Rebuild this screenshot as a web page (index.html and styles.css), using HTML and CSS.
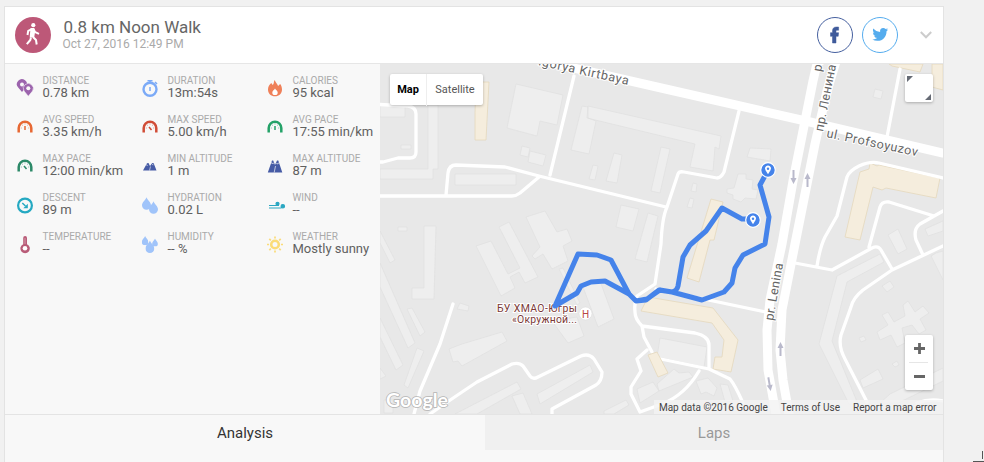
FILE: index.html
```html
<!DOCTYPE html>
<html lang="en">
<head>
<meta charset="utf-8">
<title>Noon Walk</title>
<link rel="stylesheet" href="styles.css">
</head>
<body>
<svg class="defs" width="0" height="0">
  <symbol id="gauge" viewBox="0 0 16 16"><path d="M1.700 13.500V9A6.300 6.300 0 0 1 14.300 9V13.500" fill="none" stroke="currentColor" stroke-width="2.500"/><path d="M3.800 9h1M5 5.800l.8.7M8 4.500v1M11 5.800l-.8.7M12.200 9h-1" stroke="currentColor" stroke-width=".8" opacity=".7"/></symbol>
  <symbol id="drop" viewBox="0 0 10 14"><path d="M5 0C4 3 0 5.500 0 9a5 5 0 0 0 10 0C10 5.500 6 3 5 0z" fill="currentColor"/></symbol>
  <symbol id="pin" viewBox="0 0 16 16"><circle cx="8" cy="8" r="7.300" fill="#4583ea" stroke="#fff" stroke-width="1.200"/><path d="M8 12.200L5.500 8.200A3 3 0 1 1 10.500 8.200z" fill="#fff"/><circle cx="8" cy="6.700" r="1.200" fill="#4583ea"/></symbol>
  <symbol id="arrow" viewBox="0 0 8 14"><path d="M4 0L7 6H5v8H3V6H1z" fill="#b9b9cb"/></symbol>
</svg>
<main class="card">
  <header class="head">
    <svg class="sport" viewBox="0 0 36 36"><circle cx="18" cy="18" r="18" fill="#bd5878"/><circle cx="18.300" cy="8.200" r="2.100" fill="#fff"/><path d="M17.500 11.800L13.200 13.800L12.500 18M18.300 12L20.200 15.200L24 16.800M16 20.500L15.300 23L11.800 27.200M18 20L21 23L21.700 27.500" fill="none" stroke="#fff" stroke-width="2" stroke-linejoin="round"/><path d="M15.500 11h3.700l1 3-1 6.500h-4.500z" fill="#fff"/></svg>
    <div class="titles"><h1>0.8 km Noon Walk</h1><p>Oct 27, 2016 12:49 PM</p></div>
    <div class="social">
      <svg viewBox="0 0 36 36"><circle cx="18" cy="18" r="17.500" fill="#fff" stroke="#46609f"/><path d="M15.500 26V19.300H13.500V15.700h2v-1.700c0-2.800 1.400-4 4-4h2.100V13.200h-1.300c-1.100 0-1.300.5-1.300 1.300v1.200h2.600l-.4 3.600h-2.200v6.700z" fill="#3f5b9b" stroke="#3f5b9b" stroke-width=".5"/></svg>
      <svg viewBox="0 0 36 36"><circle cx="18" cy="18" r="17.500" fill="#fff" stroke="#55acee"/><path transform="translate(10.300 9.500) scale(.66)" d="M23.950 4.570a10 10 0 0 1-2.820.78 4.960 4.960 0 0 0 2.160-2.730c-.95.560-2 .96-3.120 1.190a4.920 4.920 0 0 0-8.390 4.480C7.700 8.100 4.070 6.130 1.640 3.160a4.820 4.820 0 0 0-.66 2.480c0 1.710.87 3.210 2.190 4.100a4.900 4.900 0 0 1-2.230-.62v.06a4.920 4.920 0 0 0 3.950 4.830 5 5 0 0 1-2.210.08 4.940 4.940 0 0 0 4.600 3.420A9.870 9.870 0 0 1 0 19.540a13.990 13.990 0 0 0 7.550 2.210c9.050 0 14-7.500 14-13.980 0-.21 0-.42-.02-.63a9.940 9.940 0 0 0 2.460-2.550z" fill="#55acee"/></svg>
    </div>
    <svg class="chev" viewBox="0 0 12 8"><path d="M.8 1L6 6.300 11.200 1" fill="none" stroke="#ccc" stroke-width="2"/></svg>
  </header>
  <section class="body">
    <div class="stats">
      <div class="stat"><svg viewBox="0 0 16 16"><g fill="#9c64ad"><path d="M5 12L1.200 7.500A5 5 0 1 1 9 7z"/><path d="M11.300 16.300L7 11A5 5 0 1 1 15.600 11z" stroke="#f8f8f8" stroke-width=".6"/></g><circle cx="5" cy="4.500" r="2" fill="#f8f8f8"/><circle cx="11.300" cy="8.300" r="2" fill="#f8f8f8"/></svg><div><h2>DISTANCE</h2><p>0.78 km</p></div></div>
      <div class="stat"><svg viewBox="0 0 16 16" fill="none" stroke="#7baaf7"><circle cx="8" cy="9.300" r="6.500" stroke-width="2.400"/><path d="M5.500.8h5M8 1v2M13 2l2 2" stroke-width="1.600"/><path d="M8 7v4" stroke-width="1.500"/></svg><div><h2>DURATION</h2><p>13m:54s</p></div></div>
      <div class="stat"><svg viewBox="0 0 16 16"><path d="M7.800 0c-1.500 1.800-.4 3.800-2.200 5L4.300 3C2 5 1 7 1 9.500 1 13.500 4 16.300 8 16.300s7-2.800 7-6.800c0-2.200-.7-4.200-1.900-5.500l-2 2C10 3.500 8.600 2.500 7.800 0z" fill="#ef8059"/><path d="M8 8.500c-.5 1.300-2.700 2-2.700 3.900a2.700 2.700 0 0 0 5.400 0C10.700 10.500 8.500 9.800 8 8.500z" fill="#fff"/></svg><div><h2>CALORIES</h2><p>95 kcal</p></div></div>
      <div class="stat orange"><svg viewBox="0 0 16 16"><use href="#gauge"/><path d="M8 7v4" stroke="currentColor" stroke-width="1.500"/></svg><div><h2>AVG SPEED</h2><p>3.35 km/h</p></div></div>
      <div class="stat red"><svg viewBox="0 0 16 16"><use href="#gauge"/><path d="M7 8l2.500 3" stroke="currentColor" stroke-width="1.500"/></svg><div><h2>MAX SPEED</h2><p>5.00 km/h</p></div></div>
      <div class="stat green"><svg viewBox="0 0 16 16"><use href="#gauge"/><path d="M8 7v4" stroke="currentColor" stroke-width="1.500"/></svg><div><h2>AVG PACE</h2><p>17:55 min/km</p></div></div>
      <div class="stat deep"><svg viewBox="0 0 16 16"><use href="#gauge"/><path d="M7 8l2.500 3" stroke="currentColor" stroke-width="1.500"/></svg><div><h2>MAX PACE</h2><p>12:00 min/km</p></div></div>
      <div class="stat"><svg viewBox="0 0 16 16"><path d="M1 12.500L5 5.300l1.500-.3L8 8l2.200-3 1.500.3L14.500 12.500z" fill="#465ba5"/><path d="M7.500 12.500l1-4M4 7.500l.9-.8.8 1M10 7l.8-.6.8.8" stroke="#f8f8f8" stroke-width=".6" fill="none"/></svg><div><h2>MIN ALTITUDE</h2><p>1 m</p></div></div>
      <div class="stat"><svg viewBox="0 0 16 16"><path d="M.8 14.500L5 2.500h1.200L8 7l2-4.500h1.300L15.300 14.500z" fill="#465ba5"/><path d="M7.200 14.500L8.500 8M3.800 5.500l1.200-.8.9 1.200.8-1.200M9.300 5.300l1 .8.9-1.200 1 .9" stroke="#f8f8f8" stroke-width=".7" fill="none"/></svg><div><h2>MAX ALTITUDE</h2><p>87 m</p></div></div>
      <div class="stat"><svg viewBox="0 0 16 16"><circle cx="8" cy="8.500" r="6.900" fill="none" stroke="#25a9c2" stroke-width="2.200"/><path d="M5.300 6l3.200 3" stroke="#25a9c2" stroke-width="1.500"/><path d="M10.800 6.800v4.500H6.300z" fill="#25a9c2"/></svg><div><h2>DESCENT</h2><p>89 m</p></div></div>
      <div class="stat drops"><svg viewBox="0 0 16 16"><use href="#drop" x="0" y="0" width="9" height="13"/><use href="#drop" x="7" y="4" width="9" height="13"/></svg><div><h2>HYDRATION</h2><p>0.02 L</p></div></div>
      <div class="stat"><svg viewBox="0 0 16 16" stroke="#2aa7c2" stroke-width="1.200" fill="#2aa7c2"><path d="M2 8.500h10M2 11h12.500" /><circle cx="10.500" cy="6.800" r="1.500"/><circle cx="15.800" cy="9.300" r="1.700"/></svg><div><h2>WIND</h2><p>--</p></div></div>
      <div class="stat"><svg viewBox="0 0 16 16"><path d="M6.200 2a1.900 1.900 0 0 1 3.800 0v6.200a4.700 4.700 0 1 1-3.800 0z" fill="#b95c78"/><circle cx="8" cy="12.300" r="2.300" fill="#fff"/><path d="M8 2v6" stroke="#dba7b6" stroke-width=".8"/></svg><div><h2>TEMPERATURE</h2><p>--</p></div></div>
      <div class="stat drops"><svg viewBox="0 0 16 16"><use href="#drop" x="-.2" y="0" width="6.600" height="9.200"/><use href="#drop" x="10" y="2.500" width="6" height="8"/><use href="#drop" x="3.400" y="4.500" width="9" height="12.500"/></svg><div><h2>HUMIDITY</h2><p>-- %</p></div></div>
      <div class="stat"><svg viewBox="0 0 16 16" fill="none" stroke="#fbdc78"><circle cx="8" cy="8.500" r="3.800" stroke-width="2.600"/><path d="M8 .5v2M8 14.500v2M0 8.500h2M14 8.500h2M2.300 2.800l1.500 1.500M12.200 12.700l1.500 1.500M2.300 14.200l1.500-1.500M12.200 4.300l1.500-1.500" stroke-width="1.700"/></svg><div><h2>WEATHER</h2><p>Mostly sunny</p></div></div>
    </div>
    <div class="map">
      <svg class="canvas" viewBox="380 64 563 350">
        <rect x="380" y="64" width="563" height="350" fill="#e8e8e8"/>
        <g class="blocks">
          <path d="M380 105H405V117H380zM428 105H438V169H433V179H380V169H428zM401 145h10v4h-10zM516 84L563 95L557 125L540 121L537 136L507 128zM522 146l8 2-2 9-8-2zM530 151l16 4-3 11-15-4zM455 174H516V185H455zM582 106L588 107L588 118L596 121L589 154L571 150zM588 106L721 136L719 149L715 147L713 171L690 167L695 144L587 118zM614 153l8 2-5 28-11-2zM593 165l5 1-3 14-6-1zM661 147l9 2-10 44-9-2zM693 183l4 1-1 8-5-1zM690 198l4 1-2 9-5-1zM621 205l18 4-6 22-17-4zM648 213l10 3-11 46-12-3zM750 148l21 1-1 12-23-4zM738 174h8l0 5 7 1-1 9 6 1-2 9-11-1-4 4-8-3v-4l-6-2v-4l7-1z"/>
          <path d="M380 231l15 29-5 3-10-20zM424 226H436L434 299H412V288H424zM380 263l35 80-7 5-28-61zM398 227h9v4h-9zM412 308l13 24-5 4-13-27zM417 348l7 3-16 37-4-3zM380 318l23 47-7 5-16-33zM460 303l9 3-1 5-11-2zM380 368l6 8-6 3zM449 349L462 344 502 332 507 341 462 366 458 361 453 362zM476 246L491 241 508 274 520 268 499 227 509 222 538 277 525 283 519 272 510 277 515 288 501 296zM526 217L545 211 557 232 567 229 572 241 563 246 568 261 552 269 543 254 535 259 532 256 540 247zM559 269l4-1 17 35-3 2z"/>
          <path d="M583 287L600 281 614 319 598 327zM552 321L577 317 584 336 568 343zM455 414L517 382 521 389 477 414zM537 394L590 365 593 372 540 404zM512 396l11-3 9 21h-12zM384 400h9v13h-9zM660 338L707 347 704 367 657 357zM637 389l16-7 6 9-19 12zM657 384l17-15 5 4 10-1 4 5-34 14zM696 381l12-3 9 10-3 8-8-4-5 2zM720 384l8 1 5 16-8 1zM604 411l22-11 3 5-15 9h-10z"/>
          <path d="M875 89l8 2-2 8-8-2zM925 229l18-8v10l-15 5zM888 235l10-6 9 20-9 5zM837 276L880 254 884 262 847 282 832 341 858 404 849 404 819 344zM882 286l8-5 4 6-7 5zM877 332L888 325 882 315 888 312 894 322 905 316 903 305 908 301 915 312 923 306 929 313 920 319 926 330 919 334 912 325 902 328 905 343 897 347 891 335 880 340zM859 338l5-2 2 4-5 2zM892 364l5-3 2 4-4 2zM860 380l18-11 5 10-20 9zM890 394l53-26v13l-45 22h-18zM931 256l12 24v-29l-7 2z"/>
        </g>
        <g class="tan">
          <path d="M476 82h13l-3 58h-11V113z"/><path d="M711 199l12 3-9 38h-4l-11 42-12-4z"/>
          <path d="M889 64h34l-3 8-28-6zM932 64h11v26l-11-3z"/><path d="M879 165l61 13-4 20-50-10-4 2-9-3-13 53-15-3 15-65 9-3 1-6 7 3z"/>
          <path d="M648 297L713 308 738 340 731 372 713 369 715 357 722 357 724 340 712 323 641 311z"/>
        </g>
        <g class="roads">
          <path d="M380 104.500L408 106Q416 107 416 114V152Q416 158 410 158H398L383 162H380M380 196H512Q516 196 520 193L539 177M446 195L448 173Q449 165 456 165L505 167 539 176 666 207H667L678 174Q679 171 684 172L717 178Q721 178 724 172L739 111M550 175L574 76M667 207Q662 218 661 244L655 284 637 296Q634 302 635 312 635 319 642 326L644 337 652 352M642 326L695 333Q709 336 709 345V369L656 358M647 350L637 359 641 371 631 387V394L640 412 662 404Q685 395 699 371M709 369L730 379Q735 385 743 403M656 289L766 312"/>
          <path d="M453 304L440 344 420 391 414 414M430 414Q450 400 477 382L512 364Q519 362 523 366L530 376Q533 380 538 377L581 356Q589 353 594 359L602 372Q602 381 596 385L552 409V414"/>
          <path d="M900 69L887 137M943 178L879 163Q870 161 859 166 849 171 847 177L837 216 825 237Q820 247 817 266M795 263L832 270 872 248Q878 245 881 250L892 269M869 247L880 207Q882 201 889 202L934 216M943 211L920 224Q913 229 916 240L923 255M943 246L892 270 863 290Q853 298 851 307L841 335Q838 346 845 359L867 402M917 403Q930 398 943 401"/>
        </g>
        <path class="tan" d="M648 355L657 352 668 373 658 377z"/>
        <g class="main-roads"><path d="M530 58L670 90 810 122 943 153"/><path d="M819 55L813 81 793 181 782 244 770 300 767 330 768 370 777 420"/><path d="M838 55L827 91 815 144 795 244 782 310 780 350 783 380 790 420"/></g>
        <use href="#arrow" x="803" y="173" width="9" height="14"/><use href="#arrow" x="776" y="342" width="9" height="14"/>
        <g transform="rotate(180 794 177)"><use href="#arrow" x="790" y="170" width="9" height="14"/></g><g transform="rotate(170 770 384)"><use href="#arrow" x="766" y="377" width="9" height="14"/></g>
        <g class="streets">
          <text transform="translate(538 65) rotate(12.500)" textLength="92">igorya Kirtbaya</text>
          <text transform="translate(826 137) rotate(12)" textLength="93">ul. Profsoyuzov</text>
          <text transform="translate(823 132) rotate(-79)" textLength="68">пр. Ленина</text>
          <text transform="translate(821 72) rotate(-79)">р.</text>
          <text transform="translate(773 321) rotate(-80)" textLength="58">pr. Lenina</text>
        </g>
        <g class="place"><text x="577" y="312" textLength="80">БУ ХМАО-Югры</text><text x="577" y="323" textLength="65">«Окружной...</text></g>
        <circle cx="585.500" cy="313.500" r="6.500" fill="#fff" stroke="#ddd" stroke-width=".6"/><text class="hospital" x="585.500" y="317.500">H</text>
        <path class="route" d="M768 170L760 185 769 217 765 244 743 255 735 268 732 283 724 292 702 300 672 292 659 290 646 300 636 301 629 294 605 281 591 282 581 286 577 293 555 306 578 254 597 255 611 260 629 294 636 301 647 299 660 290 672 292Q677 291 678 286L683 257 690 245 706 231 722 208 742 219 753 219"/>
        <use href="#pin" x="760" y="162" width="16" height="16"/><use href="#pin" x="745" y="212" width="16" height="16"/>
        <text class="google" x="386" y="407" textLength="62">Google</text>
      </svg>
      <div class="types"><b>Map</b><span>Satellite</span></div>
      <svg class="full" viewBox="0 0 28 28"><path d="M2 2h6L2 8zM26 26h-6l6-6z" fill="#666b75"/></svg>
      <svg class="zoom" viewBox="0 0 28 55"><path d="M9 13.500h11M14.500 8v11M9 41.500h11" stroke="#666" stroke-width="2.800"/><path d="M4 27.500h19" stroke="#e6e6e6"/></svg>
      <div class="credits"><span>Map data ©2016 Google</span><span>Terms of Use</span><span>Report a map error</span></div>
    </div>
  </section>
  <nav class="tabs"><a class="active">Analysis</a><a>Laps</a></nav>
</main>
<svg class="corner" viewBox="0 0 12 12"><path d="M1 11.500h11M10.500 1v8" stroke="#555" fill="none"/></svg>
</body>
</html>
```
FILE: styles.css
```css
* { box-sizing: border-box; }
body { margin: 0; padding: 6px 0 0 4px; height: 462px; overflow: hidden; background: #f1f1f1; font-family: Roboto, "Liberation Sans", sans-serif; color: #666; }
h1, h2, p { margin: 0; font-weight: 400; }
svg { display: block; }
.defs { position: absolute; }
.card { width: 940px; height: 470px; border: 1px solid #e3e3e3; background: #f8f8f8; }
.head { height: 57px; display: flex; align-items: center; padding: 0 11px 0 10px; background: #fff; border-bottom: 1px solid #e6e6e6; }
.sport { width: 36px; height: 36px; }
.titles { flex: 1; padding-left: 11.5px; }
.titles h1 { font-size: 17px; line-height: 20px; margin-top: -1px; color: #666; padding-left: 1px; }
.titles p { font-size: 12px; line-height: 15px; color: #aaa; }
.social { display: flex; gap: 9px; }
.social svg { width: 36px; height: 36px; }
.chev { width: 12px; height: 8px; margin-left: 22px; }
.body { display: flex; height: 350px; }
.stats { width: 375px; padding: 11px 0 0 12px; display: grid; grid-template-columns: repeat(3, 125px); grid-auto-rows: 39px; align-content: start; }
.stat { display: flex; gap: 9.5px; white-space: nowrap; }
.stat > svg { width: 16px; height: 16px; margin-top: 5px; flex: none; overflow: visible; }
.stat h2 { font-size: 10px; line-height: 11px; color: #aaa; }
.stat p { font-size: 13px; line-height: 14px; color: #606060; }
.orange { color: #e76833; }
.red { color: #d14d37; }
.green { color: #24a268; }
.deep { color: #2c8968; }
.drops { color: #a0c4fa; }
.map { position: relative; flex: 1; overflow: hidden; }
.canvas { width: 563px; height: 350px; }
.blocks { fill: #eee; stroke: #e0e0e0; stroke-width: .7; }
.tan { fill: #f5eddd; stroke: #e5d8bc; stroke-width: .8; }
.roads, .main-roads { fill: none; stroke: #fff; stroke-width: 3.3; stroke-linejoin: round; stroke-linecap: round; }
.main-roads { stroke-width: 9; }
.streets { font-size: 12.5px; fill: #656565; stroke: #fff; stroke-width: 2px; paint-order: stroke; }
.place { font-size: 10.5px; fill: #7b3937; stroke: #fff; stroke-width: 2px; paint-order: stroke; text-anchor: end; }
.hospital { font-size: 10px; fill: #b94743; text-anchor: middle; }
.route { fill: none; stroke: #4583ea; stroke-width: 5; stroke-linejoin: round; stroke-linecap: round; }
.google { font: 700 19.5px Lato, sans-serif; fill: #fff; stroke: #b4b4b4; stroke-width: 1.6px; paint-order: stroke; }
.types { position: absolute; left: 10px; top: 10px; width: 93px; height: 31px; display: flex; align-items: center; background: #fff; border-radius: 2px; box-shadow: 0 1px 3px #0004; font-size: 11px; line-height: 32px; }
.types b { width: 37px; text-align: center; color: #000; font-weight: 700; border-right: 1px solid #eee; }
.types span { flex: 1; text-align: center; color: #565656; }
.full, .zoom { position: absolute; right: 10px; width: 28px; background: #fff; border-radius: 2px; box-shadow: 0 1px 3px #0004; }
.full { top: 10px; height: 28px; }
.zoom { top: 271px; height: 55px; }
.credits { position: absolute; right: 0; bottom: 0; height: 14px; display: flex; gap: 13px; padding: 0 6.5px 0 5px; background: #f3f3f3d0; font-size: 10px; line-height: 15px; color: #444; white-space: nowrap; }
.tabs { display: flex; height: 36px; border-top: 1px solid #e4e4e4; font-size: 15px; line-height: 36px; text-align: center; }
.tabs a { width: 458px; background: #f0f0f0; color: #999; }
.tabs .active { width: 480px; background: #f8f8f8; color: #333; }
.corner { position: absolute; right: 0; bottom: 0; width: 12px; height: 12px; }
```
